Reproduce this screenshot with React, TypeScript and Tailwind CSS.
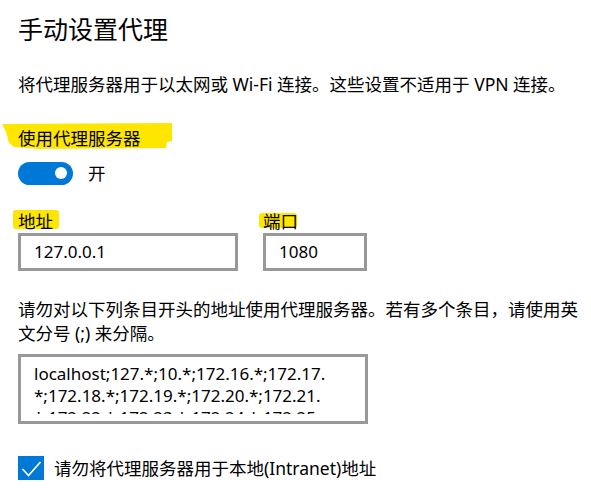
import { useState } from 'react'

const font = "font-[family-name:'Noto_Sans','Noto_Sans_CJK_SC',sans-serif]"

const bypassLines = [
  'localhost;127.*;10.*;172.16.*;172.17.',
  '*;172.18.*;172.19.*;172.20.*;172.21.',
  '*;172.22.*;172.23.*;172.24.*;172.25.',
]

const Marker = ({ className }: { className: string }) => (
  <span className={`absolute rounded-[3px] bg-[#ffe600] ${className}`} />
)

const TextBox = ({ value, width }: { value: string; width: string }) => (
  <div
    className={`flex h-[38px] items-center border-[3px] border-[#999999] bg-white pl-[13px] text-[17px] text-black ${width}`}
  >
    {value}
  </div>
)

export default function App() {
  const [enabled, setEnabled] = useState(true)
  const [bypassLocal, setBypassLocal] = useState(true)

  return (
    <div
      className={`h-[488px] w-[591px] overflow-hidden bg-white pl-[18px] pt-[13px] text-black ${font}`}
    >
      <h1 className="text-[25px] leading-[32px] font-normal">手动设置代理</h1>

      <p className="mt-[27px] whitespace-nowrap text-[17.5px] leading-[24px]">
        将代理服务器用于以太网或 Wi-Fi 连接。这些设置不适用于 VPN 连接。
      </p>

      <div className="relative mt-[30px] h-[24px] text-[17.5px] leading-[24px]">
        <svg
          className="absolute left-[-16px] top-[-4px]"
          width="172"
          height="28"
          viewBox="0 0 172 28"
        >
          <polygon
            points="0,2 170,1 170,19 165,20 164,26 38,27 12,25 7,21 4,10"
            fill="#ffe600"
          />
        </svg>
        <span className="relative">使用代理服务器</span>
      </div>

      <div className="mt-[11px] flex items-center gap-[15px]">
        <button
          type="button"
          onClick={() => setEnabled(!enabled)}
          className={`flex h-[23px] w-[55px] items-center rounded-full px-[6px] ${
            enabled ? 'justify-end bg-[#0078d7]' : 'justify-start border-2 border-black bg-white'
          }`}
        >
          <span
            className={`h-[12px] w-[12px] rounded-full ${enabled ? 'bg-white' : 'bg-black'}`}
          />
        </button>
        <span className="text-[17.5px] leading-[24px]">{enabled ? '开' : '关'}</span>
      </div>

      <div className="mt-[24px] flex gap-[25px]">
        <div className="flex flex-col">
          <div className="relative h-[24px] text-[17.5px] leading-[24px]">
            <Marker className="left-[-5px] top-[1px] h-[19px] w-[46px]" />
            <span className="relative">地址</span>
          </div>
          <TextBox value="127.0.0.1" width="w-[220px]" />
        </div>
        <div className="flex flex-col">
          <div className="relative h-[24px] text-[17.5px] leading-[24px]">
            <Marker className="left-[-4px] top-[4px] h-[15px] w-[38px]" />
            <span className="relative">端口</span>
          </div>
          <TextBox value="1080" width="w-[104px]" />
        </div>
      </div>

      <p className="mt-[26px] text-[17.5px] leading-[24px]">
        <span className="block whitespace-nowrap">
          请勿对以下列条目开头的地址使用代理服务器。若有多个条目，请使用英
        </span>
        <span className="block whitespace-nowrap">文分号 (;) 来分隔。</span>
      </p>

      <div className="mt-[9px] h-[70px] w-[350px] border-[3px] border-[#999999] bg-white pb-[7px] pl-[13px] pt-[6px]">
        <div className="h-[51px] overflow-hidden text-[17px] leading-[22px]">
          {bypassLines.map((line) => (
            <div key={line} className="whitespace-nowrap">
              {line}
            </div>
          ))}
        </div>
      </div>

      <label className="mt-[32px] flex cursor-pointer items-center gap-[10px]">
        <button
          type="button"
          onClick={() => setBypassLocal(!bypassLocal)}
          className={`h-[24px] w-[26px] ${
            bypassLocal ? 'bg-[#0078d7]' : 'border-2 border-black bg-white'
          }`}
        >
          {bypassLocal && (
            <svg width="26" height="24" viewBox="0 0 26 24">
              <polyline
                points="4.5,13 10.5,19.5 22.5,6"
                fill="none"
                stroke="white"
                strokeWidth="1.7"
              />
            </svg>
          )}
        </button>
        <span className="text-[17.5px] leading-[24px]">请勿将代理服务器用于本地(Intranet)地址</span>
      </label>
    </div>
  )
}
